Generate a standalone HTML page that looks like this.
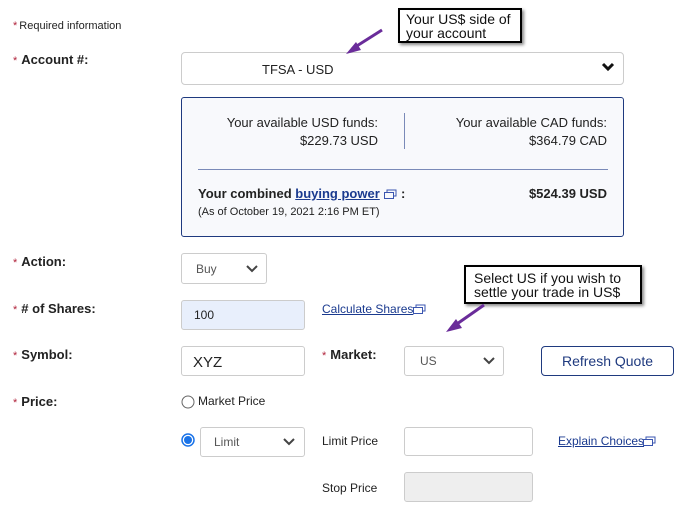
<!DOCTYPE html>
<html><head><meta charset="utf-8"><style>
*{box-sizing:border-box;margin:0;padding:0}
body{width:690px;height:507px;background:#fff;position:relative;overflow:hidden;font-family:"Liberation Sans",Arial,sans-serif;color:#222;font-size:13px}
.a{position:absolute;white-space:nowrap}
.st{color:#b0223a;font-weight:normal;font-size:11px;margin-right:4px}
.lbl{font-weight:bold;font-size:13px;color:#222}
.box{position:absolute;border:1px solid #ccc;border-radius:3px;background:#fff}
.lnk{color:#1a3a8f;text-decoration:underline}
.call{position:absolute;border:2px solid #000;background:#fff;font-size:14px;line-height:14px;padding:2px 6px;box-shadow:2px 2px 3px #888;color:#111}
</style></head><body>
<div class="a" style="left:13px;top:20px;font-size:11px"><span class="st" style="margin-right:2px">*</span>Required information</div>
<div class="a lbl" style="left:13px;top:52px"><span class="st">*</span>Account #:</div>
<div class="box" style="left:181px;top:52px;width:443px;height:33px;border-radius:4px"></div>
<div class="a" style="left:262px;top:62px;font-size:13px">TFSA - USD</div>
<svg class="a" style="left:601px;top:62px" width="14" height="10" viewBox="0 0 14 10"><path d="M2 2l5 5 5-5" stroke="#111" stroke-width="3" fill="none"/></svg>

<div class="call" style="left:398px;top:8px;width:124px;height:35px">Your US$ side of<br>your account</div>
<svg class="a" style="left:340px;top:26px" width="50" height="32"><path d="M42 4L12 23" stroke="#6a2c9a" stroke-width="3"/><path d="M6 28l10-12 5 8z" fill="#6a2c9a"/></svg>

<div class="a" style="left:181px;top:97px;width:443px;height:140px;border:1px solid #1f3a7f;border-radius:3px;background:#f8f9fc"></div>
<div class="a" style="left:190px;top:114px;width:188px;text-align:right;line-height:18px">Your available USD funds:<br>$229.73 USD</div>
<div class="a" style="left:404px;top:113px;width:1px;height:36px;background:#7a8ab8"></div>
<div class="a" style="left:410px;top:114px;width:197px;text-align:right;line-height:18px">Your available CAD funds:<br>$364.79 CAD</div>
<div class="a" style="left:198px;top:169px;width:410px;height:1px;background:#7a8ab8"></div>
<div class="a" style="left:198px;top:186px;font-weight:bold">Your combined <span class="lnk">buying power</span> <svg width="14" height="12" viewBox="0 0 14 12" style="vertical-align:-2px"><rect x="1.5" y="4.5" width="9" height="6" fill="none" stroke="#3a55b0"/><path d="M4 4V2h9v6h-2" fill="none" stroke="#3a55b0"/></svg> <span class="lnk"> </span>:</div>
<div class="a" style="left:198px;top:206px;font-size:11px">(As of October 19, 2021 2:16 PM ET)</div>
<div class="a" style="left:480px;top:186px;width:127px;text-align:right;font-weight:bold">$524.39 USD</div>

<div class="a lbl" style="left:13px;top:254px"><span class="st">*</span>Action:</div>
<div class="box" style="left:181px;top:253px;width:86px;height:31px"></div>
<div class="a" style="left:196px;top:262px;color:#555;font-size:12px">Buy</div>
<svg class="a" style="left:245px;top:264px" width="14" height="9"><path d="M2 2l5 5 5-5" stroke="#444" stroke-width="2" fill="none"/></svg>

<div class="a lbl" style="left:13px;top:301px"><span class="st">*</span># of Shares:</div>
<div class="box" style="left:181px;top:300px;width:124px;height:30px;background:#e8effc"></div>
<div class="a" style="left:194px;top:308px;font-size:12px">100</div>
<div class="a lnk" style="left:322px;top:302px;font-size:12px">Calculate Shares</div>
<svg class="a" style="left:412px;top:303px" width="14" height="12" viewBox="0 0 14 12"><rect x="1.5" y="4.5" width="9" height="6" fill="none" stroke="#3a55b0"/><path d="M4 4V2h9v6h-2" fill="none" stroke="#3a55b0"/></svg>

<div class="call" style="left:464px;top:265px;width:178px;height:39px;padding-top:4px;padding-left:8px">Select US if you wish to<br>settle your trade in US$</div>
<svg class="a" style="left:438px;top:302px" width="52" height="36"><path d="M46 3L16 24" stroke="#6a2c9a" stroke-width="3"/><path d="M8 30l10-13 6 9z" fill="#6a2c9a"/></svg>

<div class="a lbl" style="left:13px;top:347px"><span class="st">*</span>Symbol:</div>
<div class="box" style="left:181px;top:346px;width:124px;height:30px"></div>
<div class="a" style="left:193px;top:354px;font-size:15px">XYZ</div>
<div class="a lbl" style="left:322px;top:347px"><span class="st">*</span>Market:</div>
<div class="box" style="left:404px;top:346px;width:100px;height:30px"></div>
<div class="a" style="left:420px;top:354px;color:#555;font-size:12px">US</div>
<svg class="a" style="left:482px;top:356px" width="14" height="9"><path d="M2 2l5 5 5-5" stroke="#444" stroke-width="2" fill="none"/></svg>
<div class="a" style="left:541px;top:346px;width:133px;height:30px;border:1px solid #1f3a7f;border-radius:4px;color:#1f3a7f;font-size:14px;text-align:center;line-height:28px">Refresh Quote</div>

<div class="a lbl" style="left:13px;top:394px"><span class="st">*</span>Price:</div>
<svg class="a" style="left:181px;top:395px" width="14" height="14"><circle cx="7" cy="7" r="6" fill="#fff" stroke="#666"/></svg>
<div class="a" style="left:198px;top:394px;font-size:12px">Market Price</div>
<svg class="a" style="left:181px;top:433px" width="14" height="14"><circle cx="7" cy="7" r="6" fill="#fff" stroke="#1a73e8" stroke-width="1.5"/><circle cx="7" cy="7" r="4" fill="#1a73e8"/></svg>
<div class="box" style="left:200px;top:427px;width:105px;height:30px"></div>
<div class="a" style="left:214px;top:435px;color:#555;font-size:12px">Limit</div>
<svg class="a" style="left:282px;top:437px" width="14" height="9"><path d="M2 2l5 5 5-5" stroke="#444" stroke-width="2" fill="none"/></svg>
<div class="a" style="left:322px;top:434px;font-size:12px">Limit Price</div>
<div class="box" style="left:404px;top:427px;width:129px;height:29px"></div>
<div class="a lnk" style="left:558px;top:434px;font-size:12px">Explain Choices</div>
<svg class="a" style="left:642px;top:435px" width="14" height="12" viewBox="0 0 14 12"><rect x="1.5" y="4.5" width="9" height="6" fill="none" stroke="#3a55b0"/><path d="M4 4V2h9v6h-2" fill="none" stroke="#3a55b0"/></svg>
<div class="a" style="left:322px;top:481px;font-size:12px">Stop Price</div>
<div class="box" style="left:404px;top:472px;width:129px;height:30px;background:#eee"></div>
</body></html>
